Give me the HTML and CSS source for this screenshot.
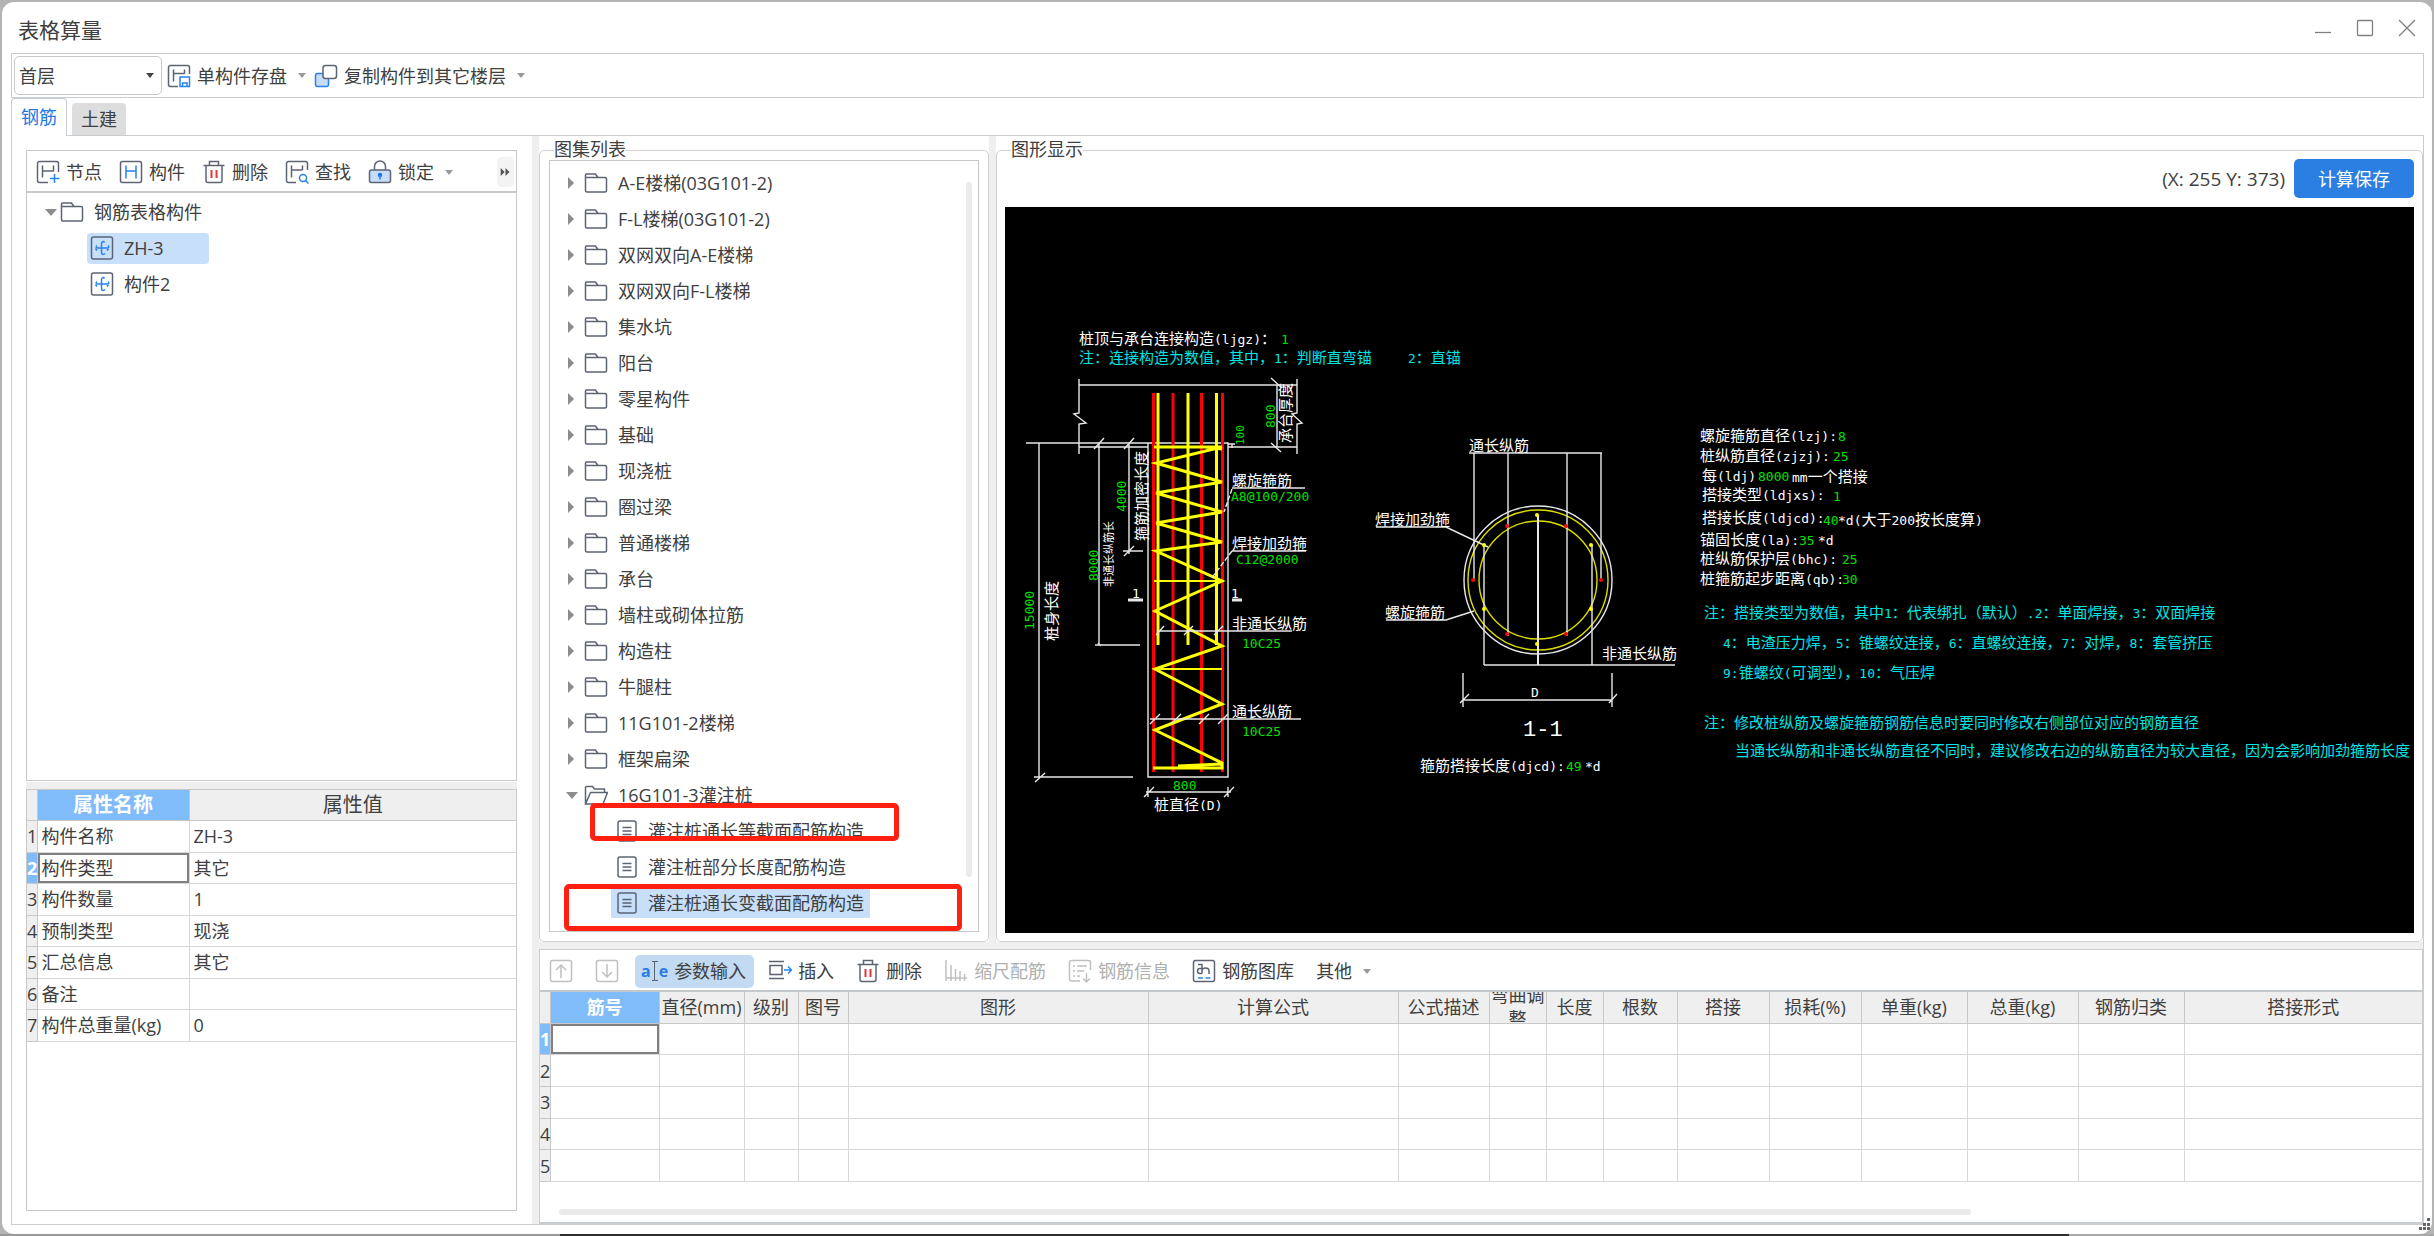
FILE: index.html
```html
<!DOCTYPE html>
<html lang="zh-CN">
<head>
    <meta charset="UTF-8">
    <meta name="viewport" content="width=device-width, initial-scale=1.0">
    <title>表格算量</title>
    <link rel="stylesheet" href="styles.css">
</head>
<body>
    <!-- Icon sprite -->
    <svg class="sprite" aria-hidden="true">
        <symbol id="i-save" viewBox="0 0 24 24">
            <path class="ln" d="M11 22.500H3.500a2 2 0 0 1-2-2v-17a2 2 0 0 1 2-2h17a2 2 0 0 1 2 2V10M6.500 5.500v12M6.500 9.500h11M17.500 5.500V10"/>
            <path class="bl" d="M13 13h9.500v9.500H13zM15.500 22v-3h4.500v3"/>
        </symbol>
        <symbol id="i-copy" viewBox="0 0 24 24">
            <rect class="blf" x="1.500" y="9.500" width="13" height="13" rx="2"/>
            <rect class="lnw" x="9" y="1.500" width="13.500" height="13" rx="2.500"/>
        </symbol>
        <symbol id="i-node" viewBox="0 0 24 24">
            <path class="ln" d="M12 22.500H3.500a2 2 0 0 1-2-2v-17a2 2 0 0 1 2-2h17a2 2 0 0 1 2 2V12M6.500 5.500v12M6.500 11h11M17.500 5.500v6"/>
            <path class="bl" d="M18.500 14v9M14 18.500h9.500"/>
        </symbol>
        <symbol id="i-part" viewBox="0 0 24 24">
            <rect class="ln" x="1.500" y="1.500" width="21" height="21" rx="2"/>
            <path class="bl" d="M7 5.500v13M17 5.500v13M7 11h10"/>
        </symbol>
        <symbol id="i-trash" viewBox="0 0 24 24">
            <path class="ln" d="M1.500 5.500h21M7.500 5V1.500h9V5M4 6v14.500a2 2 0 0 0 2 2h12a2 2 0 0 0 2-2V6"/>
            <path class="rd" d="M9.500 10v8M14.500 10v8"/>
        </symbol>
        <symbol id="i-find" viewBox="0 0 24 24">
            <path class="ln" d="M11 22.500H3.500a2 2 0 0 1-2-2v-17a2 2 0 0 1 2-2h17a2 2 0 0 1 2 2V10M6.500 5.500v12M6.500 10h11M17.500 5.500V10"/>
            <circle class="bl" cx="18" cy="18" r="3.500"/>
            <path class="bl" d="M20.500 20.500l3 3"/>
        </symbol>
        <symbol id="i-lock" viewBox="0 0 24 24">
            <path class="ln" d="M6.500 10V6.500a5.500 5.500 0 0 1 11 0V10"/>
            <rect class="lnf" x="1.500" y="10" width="21" height="12.500" rx="2"/>
            <circle cx="12" cy="15" r="2.200" fill="#1a73e8"/>
            <path class="bl" d="M12 15v4.500"/>
        </symbol>
        <symbol id="i-folder" viewBox="0 0 24 24">
            <path class="ln" d="M1.500 6.500V4a1 1 0 0 1 1-1h9l2.500 3.500M1.500 6.500h19.500a1.500 1.500 0 0 1 1.500 1.500v11.500a1.500 1.500 0 0 1-1.500 1.500H3a1.500 1.500 0 0 1-1.500-1.500z"/>
        </symbol>
        <symbol id="i-open" viewBox="0 0 24 24">
            <path class="ln" d="M1.500 21V4.500a1 1 0 0 1 1-1h6l2 2.500h10v3M1.500 21L6.500 9.500h17L19 21z"/>
        </symbol>
        <symbol id="i-item" viewBox="0 0 24 24">
            <rect class="ln" x="1.500" y="1" width="21" height="22" rx="2"/>
            <path class="bl" d="M14.500 6.500c-1-1.500-3-1-3 1v9c0 2 2 2.500 3.500 1M7 9.500c-1.500 1.500-1 2.500 1 2.500h9c2 0 2.500-1 1-2.500M7 14.500l-1.500-2M17 14.500l1.500-2"/>
        </symbol>
        <symbol id="i-doc" viewBox="0 0 24 24">
            <rect class="ln" x="3" y="2" width="18" height="20" rx="2"/>
            <path class="ln" d="M7.500 8.500h9M7.500 12h9M7.500 15.500h9"/>
        </symbol>
        <symbol id="i-up" viewBox="0 0 24 24">
            <rect class="gy" x="1.500" y="1.500" width="21" height="21" rx="2"/>
            <path class="gy" d="M12 19V6M7 11l5-5 5 5"/>
        </symbol>
        <symbol id="i-down" viewBox="0 0 24 24">
            <rect class="gy" x="1.500" y="1.500" width="21" height="21" rx="2"/>
            <path class="gy" d="M12 5v13M7 13l5 5 5-5"/>
        </symbol>
        <symbol id="i-insert" viewBox="0 0 24 24">
            <path class="ln" d="M1 2.500h15M1 19.500h15M2 6.500h12v9H2z"/>
            <path class="bl" d="M16 11h7M20 7.500l3.500 3.500-3.500 3.500"/>
        </symbol>
        <symbol id="i-scale" viewBox="0 0 24 24">
            <path class="gy" d="M2 1v21M2 19h21M7 6v16M11.500 10v12M16 12v10M20.500 15v7"/>
        </symbol>
        <symbol id="i-info" viewBox="0 0 24 24">
            <path class="gy" d="M12 22H3.500a2 2 0 0 1-2-2V3.500a2 2 0 0 1 2-2h17a2 2 0 0 1 2 2V11M5 7h2M9 7h10M5 12h2M9 12h7M5 17h2M9 17h3M18.500 14v9M15 19.500l3.500 3.500 3.500-3.500"/>
        </symbol>
        <symbol id="i-lib" viewBox="0 0 24 24">
            <rect class="ln" x="1.500" y="1.500" width="21" height="21" rx="2"/>
            <path class="ln" d="M6 5.500h4v9M10 9.500H8a2.500 2.500 0 0 0 0 5h2M10 12c0-4 7-4 7 0v3"/>
            <path class="bl" d="M6 19h5M13.500 19h5"/>
        </symbol>
    </svg>

    <main class="window">
        <header class="titlebar">
            <h1>表格算量</h1>
            <div class="controls">
                <button aria-label="最小化"><svg viewBox="0 0 18 18"><path d="M1 13.500h16"/></svg></button>
                <button aria-label="最大化"><svg viewBox="0 0 18 18"><rect x="1.500" y="1.500" width="15" height="15" rx="1"/></svg></button>
                <button aria-label="关闭"><svg viewBox="0 0 18 18"><path d="M1 1l16 16M17 1L1 17"/></svg></button>
            </div>
        </header>

        <div class="mainbar">
            <div class="floor">
                <select aria-label="楼层"><option>首层</option></select>
                <span class="caret dark"></span>
            </div>
            <button class="tool"><svg class="icon"><use href="#i-save"/></svg>单构件存盘<span class="caret"></span></button>
            <button class="tool"><svg class="icon"><use href="#i-copy"/></svg>复制构件到其它楼层<span class="caret"></span></button>
        </div>

        <nav class="tabs">
            <button class="tab active">钢筋</button>
            <button class="tab">土建</button>
        </nav>

        <div class="workspace">
            <aside class="left">
                <section class="box components">
                    <div class="toolbar">
                        <button class="tool"><svg class="icon"><use href="#i-node"/></svg>节点</button>
                        <button class="tool"><svg class="icon"><use href="#i-part"/></svg>构件</button>
                        <button class="tool"><svg class="icon"><use href="#i-trash"/></svg>删除</button>
                        <button class="tool"><svg class="icon"><use href="#i-find"/></svg>查找</button>
                        <button class="tool"><svg class="icon"><use href="#i-lock"/></svg>锁定<span class="caret"></span></button>
                        <button class="more" aria-label="更多"><svg viewBox="0 0 12 10"><path d="M0 0l5 5-5 5zM6 0l5 5-5 5z"/></svg></button>
                    </div>
                    <ul class="tree parts">
                        <li><span class="arrow open"></span><svg class="icon"><use href="#i-folder"/></svg><span>钢筋表格构件</span></li>
                        <li class="child"><span class="pick selected"><svg class="icon"><use href="#i-item"/></svg>ZH-3</span></li>
                        <li class="child"><span class="pick"><svg class="icon"><use href="#i-item"/></svg>构件2</span></li>
                    </ul>
                </section>

                <section class="box props">
                    <table>
                        <colgroup><col class="c-no"><col class="c-name"><col></colgroup>
                        <thead>
                            <tr><th></th><th class="current">属性名称</th><th>属性值</th></tr>
                        </thead>
                        <tbody>
                            <tr><th>1</th><td>构件名称</td><td>ZH-3</td></tr>
                            <tr><th class="current">2</th><td class="focus">构件类型</td><td>其它</td></tr>
                            <tr><th>3</th><td>构件数量</td><td>1</td></tr>
                            <tr><th>4</th><td>预制类型</td><td>现浇</td></tr>
                            <tr><th>5</th><td>汇总信息</td><td>其它</td></tr>
                            <tr><th>6</th><td>备注</td><td></td></tr>
                            <tr><th>7</th><td>构件总重量(kg)</td><td>0</td></tr>
                        </tbody>
                    </table>
                </section>
            </aside>

            <div class="right">
                <div class="upper">
                    <div class="pane atlas">
                        <section class="group">
                            <h2>图集列表</h2>
                            <div class="list">
                                <ul class="tree">
                                    <li><span class="arrow"></span><svg class="icon"><use href="#i-folder"/></svg><span>A-E楼梯(03G101-2)</span></li>
                                    <li><span class="arrow"></span><svg class="icon"><use href="#i-folder"/></svg><span>F-L楼梯(03G101-2)</span></li>
                                    <li><span class="arrow"></span><svg class="icon"><use href="#i-folder"/></svg><span>双网双向A-E楼梯</span></li>
                                    <li><span class="arrow"></span><svg class="icon"><use href="#i-folder"/></svg><span>双网双向F-L楼梯</span></li>
                                    <li><span class="arrow"></span><svg class="icon"><use href="#i-folder"/></svg><span>集水坑</span></li>
                                    <li><span class="arrow"></span><svg class="icon"><use href="#i-folder"/></svg><span>阳台</span></li>
                                    <li><span class="arrow"></span><svg class="icon"><use href="#i-folder"/></svg><span>零星构件</span></li>
                                    <li><span class="arrow"></span><svg class="icon"><use href="#i-folder"/></svg><span>基础</span></li>
                                    <li><span class="arrow"></span><svg class="icon"><use href="#i-folder"/></svg><span>现浇桩</span></li>
                                    <li><span class="arrow"></span><svg class="icon"><use href="#i-folder"/></svg><span>圈过梁</span></li>
                                    <li><span class="arrow"></span><svg class="icon"><use href="#i-folder"/></svg><span>普通楼梯</span></li>
                                    <li><span class="arrow"></span><svg class="icon"><use href="#i-folder"/></svg><span>承台</span></li>
                                    <li><span class="arrow"></span><svg class="icon"><use href="#i-folder"/></svg><span>墙柱或砌体拉筋</span></li>
                                    <li><span class="arrow"></span><svg class="icon"><use href="#i-folder"/></svg><span>构造柱</span></li>
                                    <li><span class="arrow"></span><svg class="icon"><use href="#i-folder"/></svg><span>牛腿柱</span></li>
                                    <li><span class="arrow"></span><svg class="icon"><use href="#i-folder"/></svg><span>11G101-2楼梯</span></li>
                                    <li><span class="arrow"></span><svg class="icon"><use href="#i-folder"/></svg><span>框架扁梁</span></li>
                                    <li><span class="arrow open"></span><svg class="icon"><use href="#i-open"/></svg><span>16G101-3灌注桩</span></li>
                                    <li class="child"><span class="pick"><svg class="icon"><use href="#i-doc"/></svg>灌注桩通长等截面配筋构造</span><span class="mark narrow"></span></li>
                                    <li class="child"><span class="pick"><svg class="icon"><use href="#i-doc"/></svg>灌注桩部分长度配筋构造</span></li>
                                    <li class="child"><span class="pick selected"><svg class="icon"><use href="#i-doc"/></svg>灌注桩通长变截面配筋构造</span><span class="mark wide"></span></li>
                                </ul>
                                <div class="vscroll"></div>
                            </div>
                        </section>
                    </div>

                    <div class="pane display">
                        <section class="group">
                            <h2>图形显示</h2>
                            <div class="actions">
                                <span class="coords">(X: 255 Y: 373)</span>
                                <button class="primary">计算保存</button>
                            </div>
                            <div class="canvas">
                                <svg class="drawing" viewBox="1005 207 1409 726" preserveAspectRatio="xMinYMin meet">
                                    <!-- Pile cap and dimension lines -->
                                    <g class="w">
                                        <path d="M1079 385H1297M1079 379V413L1074 414 1086 423 1079 424V454M1297 379V413L1292 414 1302 423 1297 424V454"/>
                                        <path d="M1079 447H1148M1228 447H1297M1026 443H1148M1148 443V777H1228V443zM1228 444H1235M1232 444V448"/>
                                        <path d="M1039 443V777M1034 777H1133M1035 782L1045 773"/>
                                        <path d="M1099 443V645M1095 645H1140M1094 449L1104 438M1098 643L1101 646"/>
                                        <path d="M1129 443V554M1123 551H1143M1124 449L1134 438M1124 556L1134 546"/>
                                        <path d="M1277 385V447M1271 378L1282 388M1271 443L1281 452"/>
                                        <path d="M1146 792H1231M1148 787V797M1228 787V797M1144 797L1154 787M1224 797L1234 787"/>
                                    </g>

                                    <!-- Rebar cage -->
                                    <path class="r" d="M1153.500 393V772M1173 393V772M1201.500 393V772M1222.500 393V772"/>
                                    <path class="y" d="M1158 393V645M1188 393V645M1216.500 393V645"/>
                                    <path class="y" d="M1154 447H1222L1156 463 1222 482 1156 493 1222 512 1156 523 1222 542 1156 551 1222 581 1155 611 1222 646 1155 669 1222 704 1155 730 1222 763V768H1153M1178 766L1222 764M1205 447L1222 449"/>
                                    <path class="y thin" d="M1154 581H1222M1154 669H1222"/>

                                    <g class="w">
                                        <path class="dash" d="M1232 489L1224 512M1232 551L1211 579"/>
                                        <path d="M1232 488H1305M1232 551H1306"/>
                                        <path d="M1157 631H1292M1156 635L1164 626M1184 635L1193 626M1214 635L1223 626"/>
                                        <path d="M1150 719H1301M1150 724L1160 714M1171 724L1181 714M1199 724L1209 714M1218 724L1228 714"/>
                                    </g>
                                    <path class="w bar" d="M1128 600H1143M1232 600H1242"/>

                                    <text x="1079" y="344">桩顶与承台连接构造<tspan>(ljgz)</tspan>：</text>
                                    <text class="g" x="1281" y="344">1</text>
                                    <text class="c" x="1079" y="363">注：连接构造为数值，其中，<tspan>1</tspan>：判断直弯锚</text>
                                    <text class="c" x="1408" y="363"><tspan>2</tspan>：直锚</text>
                                    <text x="1232" y="486">螺旋箍筋</text>
                                    <text class="g" x="1231" y="501">A8@100/200</text>
                                    <text x="1232" y="549">焊接加劲箍</text>
                                    <text class="g" x="1236" y="564">C12@2000</text>
                                    <text class="l" x="1132" y="598">1</text>
                                    <text class="l" x="1231" y="598">1</text>
                                    <text x="1232" y="629">非通长纵筋</text>
                                    <text class="g" x="1242" y="648">10C25</text>
                                    <text x="1232" y="717">通长纵筋</text>
                                    <text class="g" x="1242" y="736">10C25</text>
                                    <text class="g" x="1173" y="790">800</text>
                                    <text x="1154" y="810">桩直径<tspan>(D)</tspan></text>

                                    <g transform="rotate(-90)">
                                        <text x="-443" y="1291">承台厚度</text>
                                        <text class="g" x="-428" y="1275">800</text>
                                        <text class="g small" x="-445" y="1244">100</text>
                                        <text class="g" x="-512" y="1126">4000</text>
                                        <text x="-541" y="1147">箍筋加密长度</text>
                                        <text class="g" x="-581" y="1098">8000</text>
                                        <text class="small" x="-587" y="1113">非通长纵筋长</text>
                                        <text class="g" x="-630" y="1034">15000</text>
                                        <text x="-641" y="1057">桩身长度</text>
                                    </g>

                                    <!-- Section 1-1 -->
                                    <circle class="w" cx="1538" cy="580" r="74"/>
                                    <circle class="y hair" cx="1538" cy="580" r="70"/>
                                    <circle class="y hair" cx="1538" cy="580" r="59"/>
                                    <path class="w" d="M1469 453H1602M1474 453V581M1508 453V636M1567 453V636M1601 453V581M1484 545V665M1592 545V665M1484 665H1675"/>
                                    <path class="w mid" d="M1538 515V665"/>
                                    <path class="w" d="M1376 527H1446L1488 547M1386 620H1446L1474 611"/>
                                    <path class="w" d="M1463 673V707M1612 673V707M1463 700H1612M1460 703L1469 694M1609 703L1617 694"/>
                                    <g class="rdot">
                                        <circle cx="1473" cy="580" r="2"/><circle cx="1507" cy="526" r="2"/><circle cx="1566" cy="526" r="2"/>
                                        <circle cx="1601" cy="580" r="2"/><circle cx="1507" cy="634" r="2"/><circle cx="1566" cy="634" r="2"/>
                                    </g>
                                    <g class="ydot">
                                        <circle cx="1537" cy="515" r="2"/><circle cx="1484" cy="545" r="2"/><circle cx="1591" cy="545" r="2"/>
                                        <circle cx="1484" cy="609" r="2"/><circle cx="1591" cy="609" r="2"/><circle cx="1537" cy="644" r="2"/>
                                    </g>
                                    <text x="1469" y="451">通长纵筋</text>
                                    <text x="1375" y="525">焊接加劲箍</text>
                                    <text x="1385" y="618">螺旋箍筋</text>
                                    <text x="1602" y="659">非通长纵筋</text>
                                    <text class="l" x="1531" y="697">D</text>
                                    <text class="l big" x="1523" y="736">1-1</text>
                                    <text x="1420" y="771">箍筋搭接长度<tspan>(djcd):</tspan></text>
                                    <text class="g" x="1566" y="771">49</text>
                                    <text class="l" x="1585" y="771">*d</text>

                                    <!-- Parameters -->
                                    <text x="1700" y="441">螺旋箍筋直径<tspan>(lzj):</tspan></text>
                                    <text class="g" x="1838" y="441">8</text>
                                    <text x="1700" y="461">桩纵筋直径<tspan>(zjzj):</tspan></text>
                                    <text class="g" x="1833" y="461">25</text>
                                    <text x="1702" y="481">每<tspan>(ldj)</tspan></text>
                                    <text class="g" x="1758" y="481">8000</text>
                                    <text x="1792" y="482"><tspan>mm</tspan>一个搭接</text>
                                    <text x="1702" y="500">搭接类型<tspan>(ldjxs):</tspan></text>
                                    <text class="g" x="1833" y="501">1</text>
                                    <text x="1702" y="523">搭接长度<tspan>(ldjcd):</tspan></text>
                                    <text class="g" x="1823" y="525">40</text>
                                    <text x="1838" y="525"><tspan>*d(</tspan>大于<tspan>200</tspan>按长度算<tspan>)</tspan></text>
                                    <text x="1700" y="545">锚固长度<tspan>(la):</tspan></text>
                                    <text class="g" x="1799" y="545">35</text>
                                    <text class="l" x="1818" y="545">*d</text>
                                    <text x="1700" y="564">桩纵筋保护层<tspan>(bhc):</tspan></text>
                                    <text class="g" x="1842" y="564">25</text>
                                    <text x="1700" y="584">桩箍筋起步距离<tspan>(qb):</tspan></text>
                                    <text class="g" x="1842" y="584">30</text>

                                    <!-- Notes -->
                                    <text class="c" x="1704" y="618">注：搭接类型为数值，其中<tspan>1</tspan>：代表绑扎（默认）<tspan>.2</tspan>：单面焊接，<tspan>3</tspan>：双面焊接</text>
                                    <text class="c" x="1723" y="648"><tspan>4</tspan>：电渣压力焊，<tspan>5</tspan>：锥螺纹连接，<tspan>6</tspan>：直螺纹连接，<tspan>7</tspan>：对焊，<tspan>8</tspan>：套管挤压</text>
                                    <text class="c" x="1723" y="678"><tspan>9:</tspan>锥螺纹<tspan>(</tspan>可调型<tspan>)</tspan>，<tspan>10</tspan>：气压焊</text>
                                    <text class="c" x="1704" y="728">注：修改桩纵筋及螺旋箍筋钢筋信息时要同时修改右侧部位对应的钢筋直径</text>
                                    <text class="c" x="1735" y="756">当通长纵筋和非通长纵筋直径不同时，建议修改右边的纵筋直径为较大直径，因为会影响加劲箍筋长度</text>
                                </svg>
                            </div>
                        </section>
                    </div>
                </div>

                <section class="bars">
                    <div class="toolbar">
                        <button class="tool" disabled aria-label="上移"><svg class="icon"><use href="#i-up"/></svg></button>
                        <button class="tool" disabled aria-label="下移"><svg class="icon"><use href="#i-down"/></svg></button>
                        <button class="tool on"><span class="aie" aria-hidden="true">a<i></i>e</span>参数输入</button>
                        <button class="tool"><svg class="icon"><use href="#i-insert"/></svg>插入</button>
                        <button class="tool"><svg class="icon"><use href="#i-trash"/></svg>删除</button>
                        <button class="tool" disabled><svg class="icon"><use href="#i-scale"/></svg>缩尺配筋</button>
                        <button class="tool" disabled><svg class="icon"><use href="#i-info"/></svg>钢筋信息</button>
                        <button class="tool"><svg class="icon"><use href="#i-lib"/></svg>钢筋图库</button>
                        <button class="tool">其他<span class="caret"></span></button>
                    </div>
                    <table>
                        <colgroup>
                            <col class="c-no"><col class="c-bar"><col class="c-dia"><col class="c-grade"><col class="c-fig">
                            <col class="c-shape"><col class="c-formula"><col class="c-desc"><col class="c-bend"><col class="c-bend">
                            <col class="c-count"><col class="c-lap"><col class="c-lap"><col class="c-weight"><col class="c-total"><col class="c-weight"><col>
                        </colgroup>
                        <thead>
                            <tr>
                                <th></th><th class="current">筋号</th><th>直径(mm)</th><th>级别</th><th>图号</th><th>图形</th><th>计算公式</th><th>公式描述</th>
                                <th><div class="clip">弯曲调整</div></th><th>长度</th><th>根数</th><th>搭接</th><th>损耗(%)</th><th>单重(kg)</th><th>总重(kg)</th><th>钢筋归类</th><th>搭接形式</th>
                            </tr>
                        </thead>
                        <tbody>
                            <tr><th class="current">1</th><td class="focus"></td><td></td><td></td><td></td><td></td><td></td><td></td><td></td><td></td><td></td><td></td><td></td><td></td><td></td><td></td><td></td></tr>
                            <tr><th>2</th><td></td><td></td><td></td><td></td><td></td><td></td><td></td><td></td><td></td><td></td><td></td><td></td><td></td><td></td><td></td><td></td></tr>
                            <tr><th>3</th><td></td><td></td><td></td><td></td><td></td><td></td><td></td><td></td><td></td><td></td><td></td><td></td><td></td><td></td><td></td><td></td></tr>
                            <tr><th>4</th><td></td><td></td><td></td><td></td><td></td><td></td><td></td><td></td><td></td><td></td><td></td><td></td><td></td><td></td><td></td><td></td></tr>
                            <tr><th>5</th><td></td><td></td><td></td><td></td><td></td><td></td><td></td><td></td><td></td><td></td><td></td><td></td><td></td><td></td><td></td><td></td></tr>
                        </tbody>
                    </table>
                    <div class="hscroll"></div>
                </section>
            </div>
        </div>
        <svg class="grip" viewBox="0 0 12 12" aria-hidden="true"><path d="M8 0h3v3H8zM4 5h3v3H4zM8 5h3v3H8zM0 9h3v3H0zM4 9h3v3H4zM8 9h3v3H8z"/></svg>
    </main>
</body>
</html>
```
FILE: styles.css
```css
* {
    box-sizing: border-box;
}

body {
    margin: 0;
    padding: 2px;
    height: 100vh;
    background: linear-gradient(90deg, #9a9a9a 23%, #2e2e2e 23%, #2e2e2e 85%, #a8a8a8 85%) bottom / 100% 2px no-repeat #b4b4b4;
    color: #404040;
    font-family: "Open Sans", "Noto Sans CJK SC", sans-serif;
    font-size: 18px;
    line-height: 24px;
    overflow: hidden;
}

h1,
h2 {
    margin: 0;
    font-weight: normal;
}

ul {
    margin: 0;
    padding: 0;
    list-style: none;
}

button,
select {
    font: inherit;
    color: inherit;
    background: none;
    border: none;
    padding: 0;
    white-space: nowrap;
}

/* Icons */
.sprite {
    position: absolute;
    width: 0;
    height: 0;
}

.icon {
    width: 24px;
    height: 24px;
    flex: none;
}

.ln,
.lnw,
.lnf,
.bl,
.blf,
.rd,
.gy {
    fill: none;
    stroke: #5c6474;
    stroke-width: 1.5;
}

.lnw {
    fill: #fff;
}

.lnf {
    fill: #c6dcf8;
}

.bl,
.blf {
    stroke: #2a82ee;
}

.blf {
    fill: #c6dcf8;
}

.rd {
    stroke: #e8323c;
    stroke-width: 2;
}

.gy {
    stroke: #c0c0c0;
}

.caret {
    width: 0;
    border: 4px solid transparent;
    border-top: 5px solid #999;
    border-bottom: none;
}

.caret.dark {
    border-top-color: #444;
}

/* Window */
.window {
    position: relative;
    display: flex;
    flex-direction: column;
    height: 100%;
    padding: 0 8px 9px 9px;
    background: #fff;
    border-radius: 12px;
}

.titlebar {
    display: flex;
    align-items: center;
    justify-content: space-between;
    height: 51px;
    padding: 0 8px 0 7px;
    flex: none;
}

.titlebar h1 {
    font-size: 21px;
    margin-top: 4px;
}

.controls {
    display: flex;
    gap: 24px;
}

.controls svg {
    display: block;
    width: 18px;
    height: 18px;
    fill: none;
    stroke: #808080;
    stroke-width: 1.3;
}

.mainbar {
    display: flex;
    align-items: center;
    gap: 5px;
    padding: 2px;
    border: 1px solid #c8cdd1;
    flex: none;
}

.floor {
    position: relative;
}

.floor select {
    display: block;
    width: 148px;
    height: 39px;
    padding: 0 4px;
    border: 1px solid #c8c8c8;
    border-radius: 5px;
    appearance: none;
}

.floor .caret {
    position: absolute;
    right: 8px;
    top: 17px;
}

.tool {
    display: flex;
    align-items: center;
    gap: 6px;
}

.tool .caret {
    margin: 0 3px 0 5px;
}

.tool:disabled {
    color: #b0b0b0;
}

.tabs {
    display: flex;
    align-items: flex-end;
    gap: 5px;
    height: 38px;
    margin-bottom: -1px;
    flex: none;
    z-index: 1;
}

.tab {
    padding: 4px 9px 5px;
    height: 32px;
    margin-bottom: 1px;
    background: #ddd;
    border-radius: 4px 4px 0 0;
}

.tab.active {
    height: 38px;
    margin-bottom: 0;
    background: #fff;
    border: 1px solid #c8cdd1;
    border-bottom: none;
    color: #1f78e6;
}

.workspace {
    display: flex;
    flex: 1;
    gap: 7px;
    min-height: 0;
    border: 1px solid #c8cdd1;
    background: #efefef;
}

/* Left side */
.left {
    display: flex;
    flex-direction: column;
    flex: 0 0 520px;
    padding: 14px 15px 13px 14px;
    background: #fff;
}

.box {
    border: 1px solid #c8c8c8;
}

.components {
    flex: 631;
}

.props {
    flex: 422;
    margin-top: 8px;
    box-shadow: 0 -7px 0 #efefef;
}

.toolbar {
    display: flex;
    align-items: center;
    height: 42px;
    padding-top: 2px;
    border-bottom: 2px solid #c5c8cc;
}

.components .toolbar {
    gap: 17px;
    padding-left: 9px;
    padding-right: 2px;
}

.components .caret {
    margin-right: 0;
}

.more {
    width: 17px;
    height: 30px;
    margin-left: auto;
    background: #f3f3f3;
    border-radius: 5px;
}

.more svg {
    display: block;
    width: 11px;
    height: 8px;
    margin: auto;
    fill: #555;
}

.tree li {
    position: relative;
    display: flex;
    align-items: center;
    height: 36px;
    padding-left: 18px;
}

.tree .icon {
    margin-right: 10px;
}

.arrow {
    width: 6px;
    margin-right: 10px;
    border: 6px solid transparent;
    border-left: 6px solid #8c8c8c;
    border-right: none;
}

.arrow.open {
    width: 12px;
    margin: 0 6px 0 -2px;
    border: 6px solid transparent;
    border-top: 7px solid #8c8c8c;
    border-bottom: none;
}

.pick {
    display: flex;
    align-items: center;
}

.pick.selected {
    background: #c7dff9;
}

.parts {
    padding-top: 1px;
}

.parts li {
    padding-left: 20px;
}

.parts .arrow.open {
    margin: 0 3px 0 -2px;
}

.parts .child {
    padding-left: 60px;
}

.parts .pick {
    width: 122px;
    height: 31px;
    padding-left: 3px;
    border-radius: 4px;
}

/* Grids */
table {
    width: 100%;
    table-layout: fixed;
    border-collapse: collapse;
}

th,
td {
    height: 31px;
    padding: 0 0 0 4px;
    border: 1px solid #d8d8d8;
    border-left: none;
    text-align: left;
    white-space: nowrap;
}

th {
    padding: 0;
    background: #efefef;
    border-color: #c8c8c8;
    font-weight: normal;
    text-align: center;
}

th.current {
    background: #80bbfa;
    color: #fff;
    font-weight: bold;
}

td.focus {
    box-shadow: inset 0 0 0 2px #808080;
}

tr > :last-child {
    border-right: none;
}

thead th {
    border-top: none;
}

.c-no {
    width: 10px;
}

.c-name {
    width: 152px;
}

.props table {
    height: 252px;
}

.props thead th {
    font-size: 20px;
}

/* Right side */
.right {
    display: flex;
    flex-direction: column;
    flex: 1;
    gap: 7px;
    min-width: 0;
}

.upper {
    display: flex;
    flex: 1;
    gap: 7px;
    min-height: 0;
}

.pane {
    display: flex;
    padding-top: 14px;
    background: #fff;
}

.atlas {
    flex: 0 0 450px;
}

.display {
    flex: 1;
    min-width: 0;
}

.group {
    position: relative;
    display: flex;
    flex-direction: column;
    flex: 1;
    min-width: 0;
    padding: 9px;
    border: 1px solid #d2d2d2;
    border-radius: 5px;
}

.group h2 {
    position: absolute;
    top: -14px;
    left: 14px;
    font-size: 18px;
    background: #fff;
}

.list {
    position: relative;
    flex: 1;
    padding-top: 4px;
    border: 1px solid #c8c8c8;
}

.list .child {
    padding-left: 61px;
}

.list .pick {
    height: 29px;
    padding: 0 6px 0 4px;
}

.list .pick .icon {
    margin-right: 9px;
}

.vscroll {
    position: absolute;
    top: 21px;
    right: 6px;
    bottom: 54px;
    width: 6px;
    border-radius: 3px;
    background: #ebebeb;
}

.mark {
    position: absolute;
    z-index: 1;
    border: 5px solid #ff2012;
    border-radius: 5px;
}

.mark.narrow {
    top: -10px;
    left: 40px;
    width: 309px;
    height: 38px;
}

.mark.wide {
    top: -1px;
    left: 14px;
    width: 398px;
    height: 47px;
}

.display .group {
    padding: 8px;
}

.actions {
    display: flex;
    align-items: center;
    justify-content: flex-end;
    gap: 9px;
    margin-bottom: 9px;
}

.coords {
    font-size: 19px;
}

.primary {
    width: 120px;
    height: 39px;
    border-radius: 5px;
    background: #2c7fe2;
    color: #fff;
}

.canvas {
    flex: 1;
    min-height: 0;
    background: #000;
}

/* CAD drawing */
.drawing {
    display: block;
    width: 100%;
    height: 100%;
    fill: none;
}

.drawing text {
    fill: #fff;
    font-family: "Noto Sans CJK SC", sans-serif;
    font-size: 15px;
}

.drawing tspan,
.drawing .l,
.drawing .g {
    font-family: "DejaVu Sans Mono", monospace;
    font-size: 13px;
}

.drawing .g {
    fill: #00e000;
}

.drawing .c {
    fill: #00e5e5;
}

.drawing .small {
    font-size: 11px;
}

.drawing .big {
    font-family: "Liberation Mono", monospace;
    font-size: 22px;
}

.w {
    stroke: #e8e8e8;
    stroke-width: 1.4;
}

.mid {
    stroke-width: 2;
}

.bar {
    stroke-width: 3;
}

.dash {
    stroke-dasharray: 5 2;
}

.r {
    stroke: #f00;
    stroke-width: 3;
}

.y {
    stroke: #ff0;
    stroke-width: 3;
}

.y.thin {
    stroke-width: 2;
}

.y.hair {
    stroke: #dcdc00;
    stroke-width: 1.4;
}

.rdot {
    fill: #f00;
}

.ydot {
    fill: #ff0;
}

/* Rebar table */
.bars {
    display: flex;
    flex-direction: column;
    height: 275px;
    border: 1px solid #c8cdd1;
    border-bottom-width: 2px;
    background: #fff;
    flex: none;
}

.bars .toolbar {
    gap: 22px;
    padding-left: 9px;
    flex: none;
}

.bars .tool.on {
    height: 33px;
    margin: 0 -8px 0 -6px;
    padding: 0 8px 0 6px;
    border-radius: 5px;
    background: #c3daf3;
}

.aie {
    display: flex;
    align-items: center;
    gap: 1px;
    color: #2a7de6;
    font-size: 16px;
    font-weight: bold;
}

.aie i {
    width: 6px;
    height: 20px;
    border: solid #5c6474;
    border-width: 1px 0;
    background: linear-gradient(#5c6474, #5c6474) center / 1px 100% no-repeat;
}

.bars table {
    height: 190px;
    flex: none;
}

.clip {
    display: flex;
    align-items: center;
    justify-content: center;
    height: 30px;
    overflow: hidden;
    white-space: normal;
}

.c-bar { width: 109px; }
.c-dia { width: 85px; }
.c-grade { width: 54px; }
.c-fig { width: 50px; }
.c-shape { width: 300px; }
.c-formula { width: 250px; }
.c-desc { width: 91px; }
.c-bend { width: 57px; }
.c-count { width: 74px; }
.c-lap { width: 92px; }
.c-weight { width: 106px; }
.c-total { width: 111px; }

.hscroll {
    width: 75%;
    height: 6px;
    margin: auto 0 7px 19px;
    border-radius: 3px;
    background: #e9e9e9;
}

.grip {
    position: absolute;
    right: 1px;
    bottom: 4px;
    width: 12px;
    height: 12px;
    fill: #666;
}
```
